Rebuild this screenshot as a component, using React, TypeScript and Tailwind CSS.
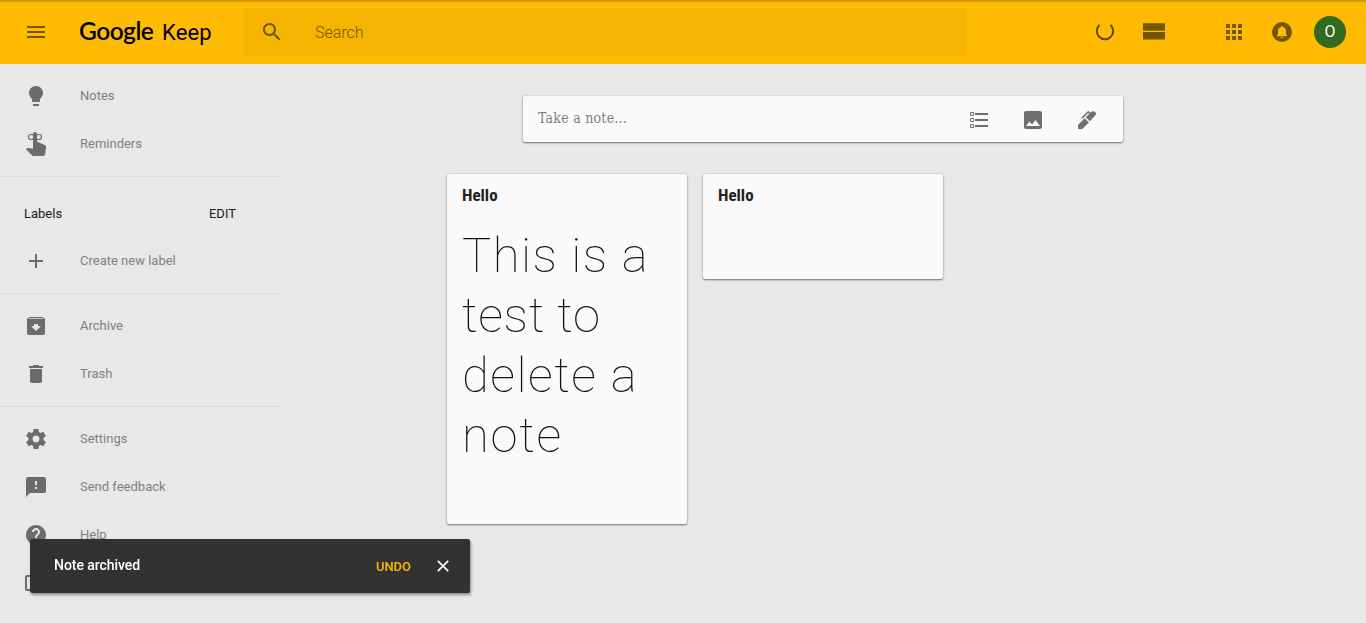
import type { ReactNode } from "react";

function Icon({ children, className = "" }: { children: ReactNode; className?: string }) {
  return (
    <svg viewBox="0 0 24 24" className={`size-6 shrink-0 ${className}`} fill="currentColor">
      {children}
    </svg>
  );
}

function NavItem({ icon, label }: { icon: ReactNode; label: string }) {
  return (
    <a className="flex h-12 items-center pl-6 text-[#6b6b6b]">
      {icon}
      <span className="ml-8 text-[13px] leading-4 font-normal text-[#808080]">{label}</span>
    </a>
  );
}

const bulb = (
  <Icon>
    <path d="M9 21c0 .5.4 1 1 1h4c.6 0 1-.5 1-1v-1H9v1zm3-19C8.1 2 5 5.1 5 9c0 2.4 1.2 4.5 3 5.7V17c0 .5.4 1 1 1h6c.6 0 1-.5 1-1v-2.3c1.8-1.3 3-3.4 3-5.7 0-3.9-3.1-7-7-7z" />
  </Icon>
);

const reminder = (
  <Icon>
    <path d="M9 2a2 2 0 0 1 4 0v7.6l7.6 3.3c1 .4 1.5 1.100 1.400 2.100L21.200 22c-.2 1.200-1 2-2.200 2H9.800c-.7 0-1.200-.2-1.600-.6L2 17.300l.7-.8c.4-.4 1-.5 1.700-.4L9 16.800z" />
    <g fill="none" stroke="currentColor" strokeWidth="1.200">
      <rect x="4.500" y="2.500" width="5.500" height="5" rx="2.500" />
      <rect x="12" y="2.500" width="5.500" height="5" rx="2.500" />
    </g>
  </Icon>
);

const archive = (
  <Icon>
    <path
      fillRule="evenodd"
      d="M5.500 3h13L21 5v14a2 2 0 0 1-2 2H5a2 2 0 0 1-2-2V5zM5.500 4.200l-.7.8h14.400l-.7-.8zM10 10v2H7l5 5 5-5h-3v-2z"
    />
  </Icon>
);

const trash = (
  <Icon>
    <path d="M6 19c0 1.100.9 2 2 2h8c1.100 0 2-.9 2-2V7H6v12zM19 4h-3.500l-1-1h-5l-1 1H5v2h14V4z" />
  </Icon>
);

const settings = (
  <Icon>
    <path d="M19.430 12.980c.04-.32.07-.64.07-.98s-.03-.66-.07-.98l2.110-1.650c.19-.15.24-.42.12-.64l-2-3.460c-.12-.22-.39-.3-.61-.22l-2.490 1c-.52-.4-1.080-.73-1.690-.98l-.38-2.650C14.460 2.180 14.250 2 14 2h-4c-.25 0-.46.18-.49.42l-.38 2.650c-.61.25-1.170.59-1.690.98l-2.490-1c-.23-.09-.49 0-.61.22l-2 3.460c-.13.22-.07.49.12.64l2.110 1.650c-.04.32-.07.65-.07.98s.03.66.07.98l-2.110 1.650c-.19.15-.24.42-.12.64l2 3.460c.12.22.39.3.61.22l2.490-1c.52.4 1.080.73 1.690.98l.38 2.650c.03.24.24.42.49.42h4c.25 0 .46-.18.49-.42l.38-2.650c.61-.25 1.170-.59 1.690-.98l2.490 1c.23.09.49 0 .61-.22l2-3.460c.12-.22.07-.49-.12-.64l-2.110-1.650zM12 15.500c-1.930 0-3.500-1.570-3.500-3.500s1.570-3.500 3.500-3.500 3.500 1.570 3.500 3.500-1.570 3.500-3.500 3.500z" />
  </Icon>
);

const feedback = (
  <Icon>
    <path d="M20 2H4c-1.100 0-1.990.9-1.990 2L2 22l4-4h14c1.100 0 2-.9 2-2V4c0-1.100-.9-2-2-2zm-7 12h-2v-2h2v2zm0-4h-2V6h2v4z" />
  </Icon>
);

const help = (
  <Icon>
    <path d="M12 2C6.480 2 2 6.480 2 12s4.480 10 10 10 10-4.480 10-10S17.520 2 12 2zm1 17h-2v-2h2v2zm2.070-7.750l-.9.92C13.450 12.900 13 13.500 13 15h-2v-.5c0-1.100.45-2.100 1.170-2.830l1.240-1.260c.37-.36.59-.86.59-1.410 0-1.100-.9-2-2-2s-2 .9-2 2H8c0-2.210 1.790-4 4-4s4 1.790 4 4c0 .88-.36 1.680-.93 2.250z" />
  </Icon>
);

function Header() {
  return (
    <header className="flex h-16 shrink-0 items-center bg-[#fb0] bg-[linear-gradient(to_bottom,#cc9600_0px,#cc9600_1px,#f0b000_2px,#ffbb00_3px)] text-[#755600]">
      <Icon className="ml-6">
        <path d="M3 18h18v-2H3v2zm0-5h18v-2H3v2zm0-7v2h18V6H3z" />
      </Icon>
      <div className="ml-8 flex w-41 items-baseline text-black">
        <span className="-ml-px w-[83px] font-['Lato'] text-[24.5px] leading-8 font-semibold tracking-[-0.5px]">Google</span>
        <span className="text-[22px] leading-8 font-normal tracking-[0.15px]">Keep</span>
      </div>
      <div className="flex h-12 w-[722px] items-center rounded bg-[#f5b400]">
        <Icon className="ml-4">
          <path d="M15.500 14h-.79l-.28-.27C15.410 12.590 16 11.110 16 9.500 16 5.910 13.090 3 9.500 3S3 5.910 3 9.500 5.910 16 9.500 16c1.610 0 3.090-.59 4.230-1.570l.27.28v.79l5 4.990L20.490 19l-4.990-5zm-6 0C7.010 14 5 11.990 5 9.500S7.010 5 9.500 5 14 7.010 14 9.500 11.990 14 9.500 14z" />
        </Icon>
        <span className="ml-[31px] pt-0.5 text-base font-light text-[#755600]">Search</span>
      </div>
      <div className="ml-[127px] flex items-center">
        <svg viewBox="0 0 24 24" className="size-6 text-[#5e4400]" fill="none" stroke="currentColor" strokeWidth="2">
          <path d="M6.500 5a8.200 8.200 0 1 0 11 0" />
        </svg>
        <Icon className="ml-[25px]">
          <path d="M1 3.300h22v7.500H1zM1 12.100h22v7.500H1z" />
        </Icon>
        <Icon className="ml-14">
          <path d="M4 8h4V4H4v4zm6 12h4v-4h-4v4zm-6 0h4v-4H4v4zm0-6h4v-4H4v4zm6 0h4v-4h-4v4zm6-10v4h4V4h-4zm-6 4h4V4h-4v4zm6 6h4v-4h-4v4zm0 6h4v-4h-4v4z" />
        </Icon>
        <Icon className="ml-6">
          <circle cx="12" cy="12" r="10" />
          <path
            fill="#ffbb00"
            d="M12 6a1 1 0 0 1 1 1c2 .4 3 2 3 4v3.300l1 1.200v.7H7v-.7l1-1.200V11c0-2 1-3.600 3-4a1 1 0 0 1 1-1zM10.800 17h2.400c0 .7-.5 1.200-1.200 1.200s-1.200-.5-1.200-1.200z"
          />
        </Icon>
        <div className="ml-5 flex size-8 items-center justify-center rounded-full bg-[#33691e] text-base text-white">O</div>
      </div>
    </header>
  );
}

function Sidebar() {
  return (
    <nav className="w-[280px] shrink-0">
      <div className="border-b border-[#dadada] py-2">
        <NavItem icon={bulb} label="Notes" />
        <NavItem icon={reminder} label="Reminders" />
      </div>
      <div className="border-b border-[#dadada] py-2">
        <div className="flex h-13 items-center justify-between pt-1.5 pr-11 pl-6 text-[13px] text-[#212121]">
          <span>Labels</span>
          <span>EDIT</span>
        </div>
        <NavItem
          icon={
            <Icon>
              <path d="M19 13h-6v6h-2v-6H5v-2h6V5h2v6h6v2z" />
            </Icon>
          }
          label="Create new label"
        />
      </div>
      <div className="border-b border-[#dadada] py-2">
        <NavItem icon={archive} label="Archive" />
        <NavItem icon={trash} label="Trash" />
      </div>
      <div className="py-2">
        <NavItem icon={settings} label="Settings" />
        <NavItem icon={feedback} label="Send feedback" />
        <NavItem icon={help} label="Help" />
        <NavItem
          icon={
            <Icon>
              <path fillRule="evenodd" d="M3 4h18a2 2 0 0 1 2 2v12a2 2 0 0 1-2 2H3a2 2 0 0 1-2-2V6a2 2 0 0 1 2-2zm0 2v12h18V6z" />
            </Icon>
          }
          label=""
        />
      </div>
    </nav>
  );
}

const cardClass = "rounded-xs bg-[#fafafa] shadow-[0_1px_2px_rgba(0,0,0,0.5),0_0_2px_rgba(0,0,0,0.12)]";

function Title({ children }: { children: ReactNode }) {
  return (
    <h2 className="pt-3 pl-[15px] font-['Roboto_Condensed','Roboto'] text-[17px] leading-[19px] font-bold text-[#212121]">
      {children}
    </h2>
  );
}

export default function App() {
  return (
    <div className="flex h-[623px] w-[1366px] flex-col overflow-hidden bg-[#e8e8e8] font-['Roboto',sans-serif]">
      <Header />
      <div className="flex">
        <Sidebar />
        <main className="ml-[167px] pt-8">
          <div className={`ml-[76px] flex h-[46px] w-[600px] items-center pl-[15px] text-[#6f6f6f] ${cardClass}`}>
            <span className="mb-0.5 w-[429px] font-['DejaVu_Serif_Condensed','DejaVu_Serif',serif] text-[14px] font-normal tracking-[0.25px] text-[#808080]">
              Take a note…
            </span>
            <Icon className="mt-0.5">
              <path d="M8 5h13v2H8zM8 11h13v2H8zM8 17h13v2H8z" />
              <path fill="none" stroke="currentColor" d="M3.500 4.500h3v3h-3zM3.500 10.500h3v3h-3zM3.500 16.500h3v3h-3z" />
            </Icon>
            <Icon className="mt-0.5 ml-[30px]">
              <path
                fillRule="evenodd"
                d="M21 19V5c0-1.100-.9-2-2-2H5c-1.100 0-2 .9-2 2v14c0 1.100.9 2 2 2h14c1.100 0 2-.9 2-2zM8.500 13.500l2.500 3.010L14.500 12l4.500 6H5l3.500-4.500z"
              />
            </Icon>
            <Icon className="mt-0.5 ml-[30px]">
              <path d="M3 17L9.700 10.300l4.200 4.200L7.300 21H3zM10.800 9.200l5-5c.9-.9 1.700-1.200 2.500-.8h1c.9.3 1.500 1 1.700 1.800.2.8-.2 1.700-.9 2.400L14.900 13.200z" />
              <path fill="none" stroke="currentColor" strokeWidth="1.600" d="M7 10.100l6.300-6.300 1.900 1.900" />
            </Icon>
          </div>
          <div className="mt-8 flex items-start gap-4">
            <article className={`h-[350px] w-[240px] ${cardClass}`}>
              <Title>Hello</Title>
              <p className="mt-[21px] flex flex-col items-start pl-[15px] text-[49px] leading-[60px] font-thin whitespace-nowrap text-[#111]">
                <span className="tracking-[1.4px]">This is a</span>
                <span className="tracking-[0.7px]">test to</span>
                <span className="tracking-[1.5px]">delete a</span>
                <span className="tracking-[1.7px]">note</span>
              </p>
            </article>
            <article className={`h-[105px] w-[240px] ${cardClass}`}>
              <Title>Hello</Title>
            </article>
          </div>
        </main>
      </div>
      <div className="fixed top-[539px] left-[30px] flex h-[54px] w-[440px] items-center rounded-xs bg-[#323232] pl-6 shadow-[1px_2px_3px_rgba(0,0,0,0.4)]">
        <span className="w-[322px] pb-0.5 text-sm font-medium tracking-[-0.05px] text-white">Note archived</span>
        <span className="w-[55px] pt-0.5 text-[13px] font-semibold tracking-[-0.1px] text-[#f4b400]">UNDO</span>
        <svg viewBox="0 0 24 24" className="size-6 text-white" fill="none" stroke="currentColor" strokeWidth="1.700">
          <path d="M6.800 6.800l10.400 10.400M17.200 6.800L6.800 17.200" />
        </svg>
      </div>
    </div>
  );
}
